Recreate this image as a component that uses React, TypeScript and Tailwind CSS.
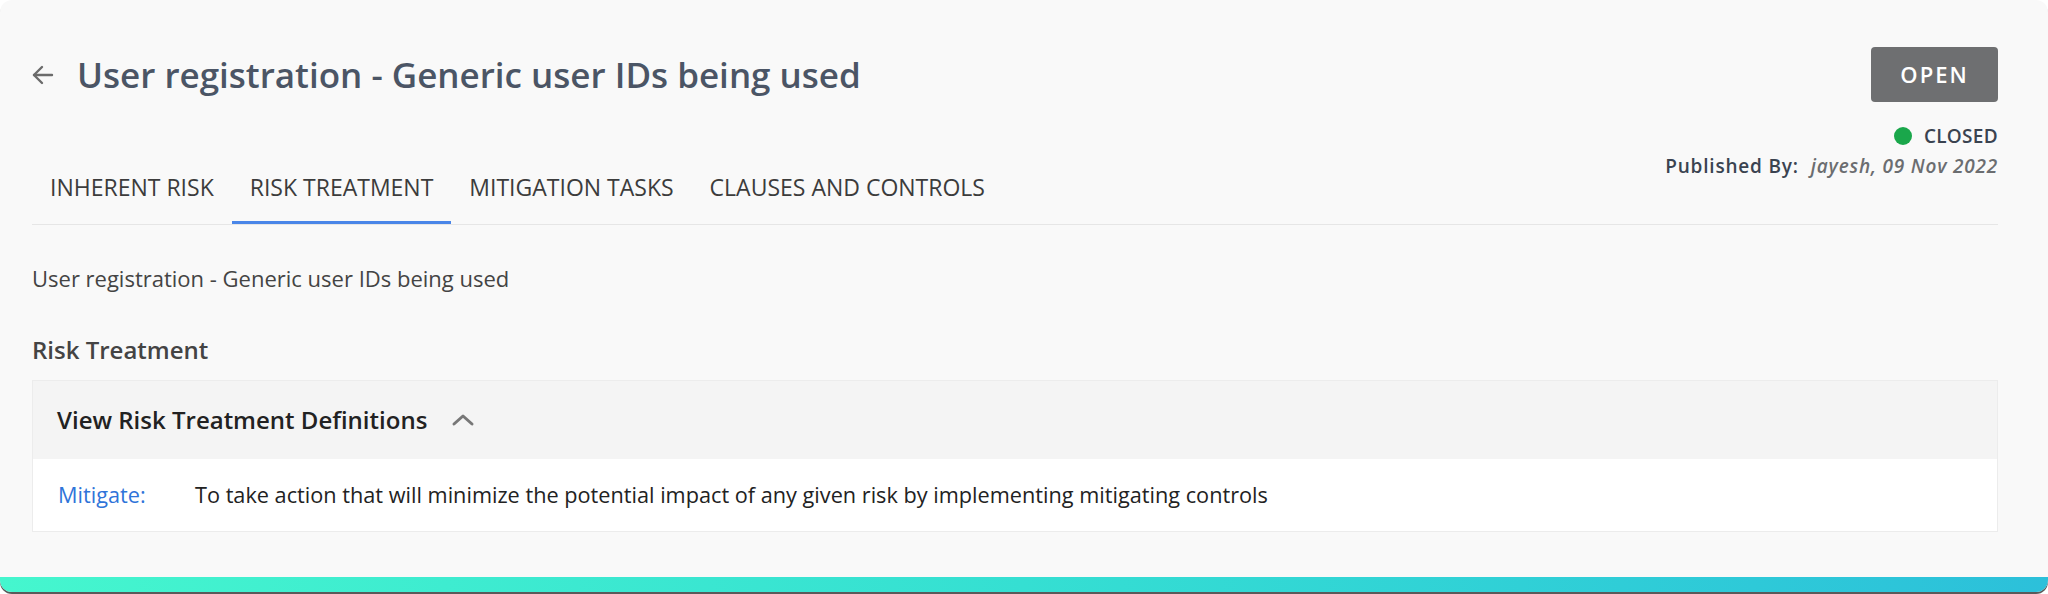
import React from "react";

export default function App() {
  return (
    <div className="w-[2048px] h-[594px] bg-white font-['Open_Sans','Noto_Sans',sans-serif]">
      <div className="h-[592px] rounded-[12px] overflow-hidden bg-[#f9f9f9] flex flex-col shadow-[0_2px_0_#5a5a5a]">
        <div className="h-[577px] pt-[47px] pl-[32px] pr-[50px]">
          <div className="flex justify-between items-start border-b border-[#e6e6e6]">
            <div className="flex flex-col">
              <div className="h-[55px] flex items-center">
                <svg width="22" height="20" viewBox="0 0 22 20" fill="none" stroke="#6b6b6b" strokeWidth="2.4" strokeLinecap="round" strokeLinejoin="round">
                  <path d="M20 10H2" />
                  <path d="M10 2L2 10l8 8" />
                </svg>
                <h1 className="ml-[23px] text-[35px] leading-[44px] font-semibold text-[#4b5565]">
                  User registration - Generic user IDs being used
                </h1>
              </div>
              <div className="flex mt-[51px]">
                {["INHERENT RISK", "RISK TREATMENT", "MITIGATION TASKS", "CLAUSES AND CONTROLS"].map((t, i) => (
                  <div
                    key={t}
                    className={
                      i === 1
                        ? "px-[18px] pt-[20px] pb-[20px] border-b-[3px] border-[#4a86e8] text-[23px] leading-[28px] text-[#3c3c3c]"
                        : "px-[18px] pt-[20px] pb-[20px] border-b-[3px] border-transparent text-[23px] leading-[28px] text-[#3c3c3c]"
                    }
                  >
                    {t}
                  </div>
                ))}
              </div>
            </div>
            <div className="flex flex-col items-end">
              <button className="w-[127px] h-[55px] rounded-[4px] bg-[#6e6f71] text-white text-[22px] font-semibold tracking-[2px]">
                OPEN
              </button>
              <div className="mt-[22px] flex items-center h-[24px]">
                <span className="w-[18px] h-[18px] rounded-full bg-[#1aa74b]" />
                <span className="ml-[12px] text-[19px] leading-[24px] font-semibold text-[#3a4350] tracking-[0.3px]">CLOSED</span>
              </div>
              <div className="mt-[6px] flex items-center h-[24px] text-[19px] leading-[24px] font-semibold">
                <span className="text-[#3a4350] tracking-[0.8px]">Published By:</span>
                <span className="ml-[12px] italic text-[#6b6d70] tracking-[0.8px]">jayesh, 09 Nov 2022</span>
              </div>
            </div>
          </div>
          <p className="mt-[39px] text-[22px] leading-[28px] text-[#444]">User registration - Generic user IDs being used</p>
          <h2 className="mt-[43px] text-[24px] leading-[30px] font-semibold text-[#444]">Risk Treatment</h2>
          <div className="mt-[15px] border border-[#ececec]">
            <div className="h-[78px] bg-[#f4f4f4] flex items-center pl-[24px]">
              <span className="text-[24px] font-semibold text-[#222]">View Risk Treatment Definitions</span>
              <svg width="24" height="14" viewBox="0 0 24 14" fill="none" stroke="#777" strokeWidth="3" strokeLinecap="round" strokeLinejoin="round" className="ml-[24px]">
                <path d="M3 11l9-8 9 8" />
              </svg>
            </div>
            <div className="h-[72px] bg-white flex items-center pl-[25px] text-[21.7px]">
              <span className="w-[137px] text-[#2f74d9]">Mitigate:</span>
              <span className="text-[#222]">To take action that will minimize the potential impact of any given risk by implementing mitigating controls</span>
            </div>
          </div>
        </div>
        <div className="h-[15px] bg-gradient-to-r from-[#45f6ce] via-[#35dfd2] to-[#2cc0da]" />
      </div>
    </div>
  );
}
